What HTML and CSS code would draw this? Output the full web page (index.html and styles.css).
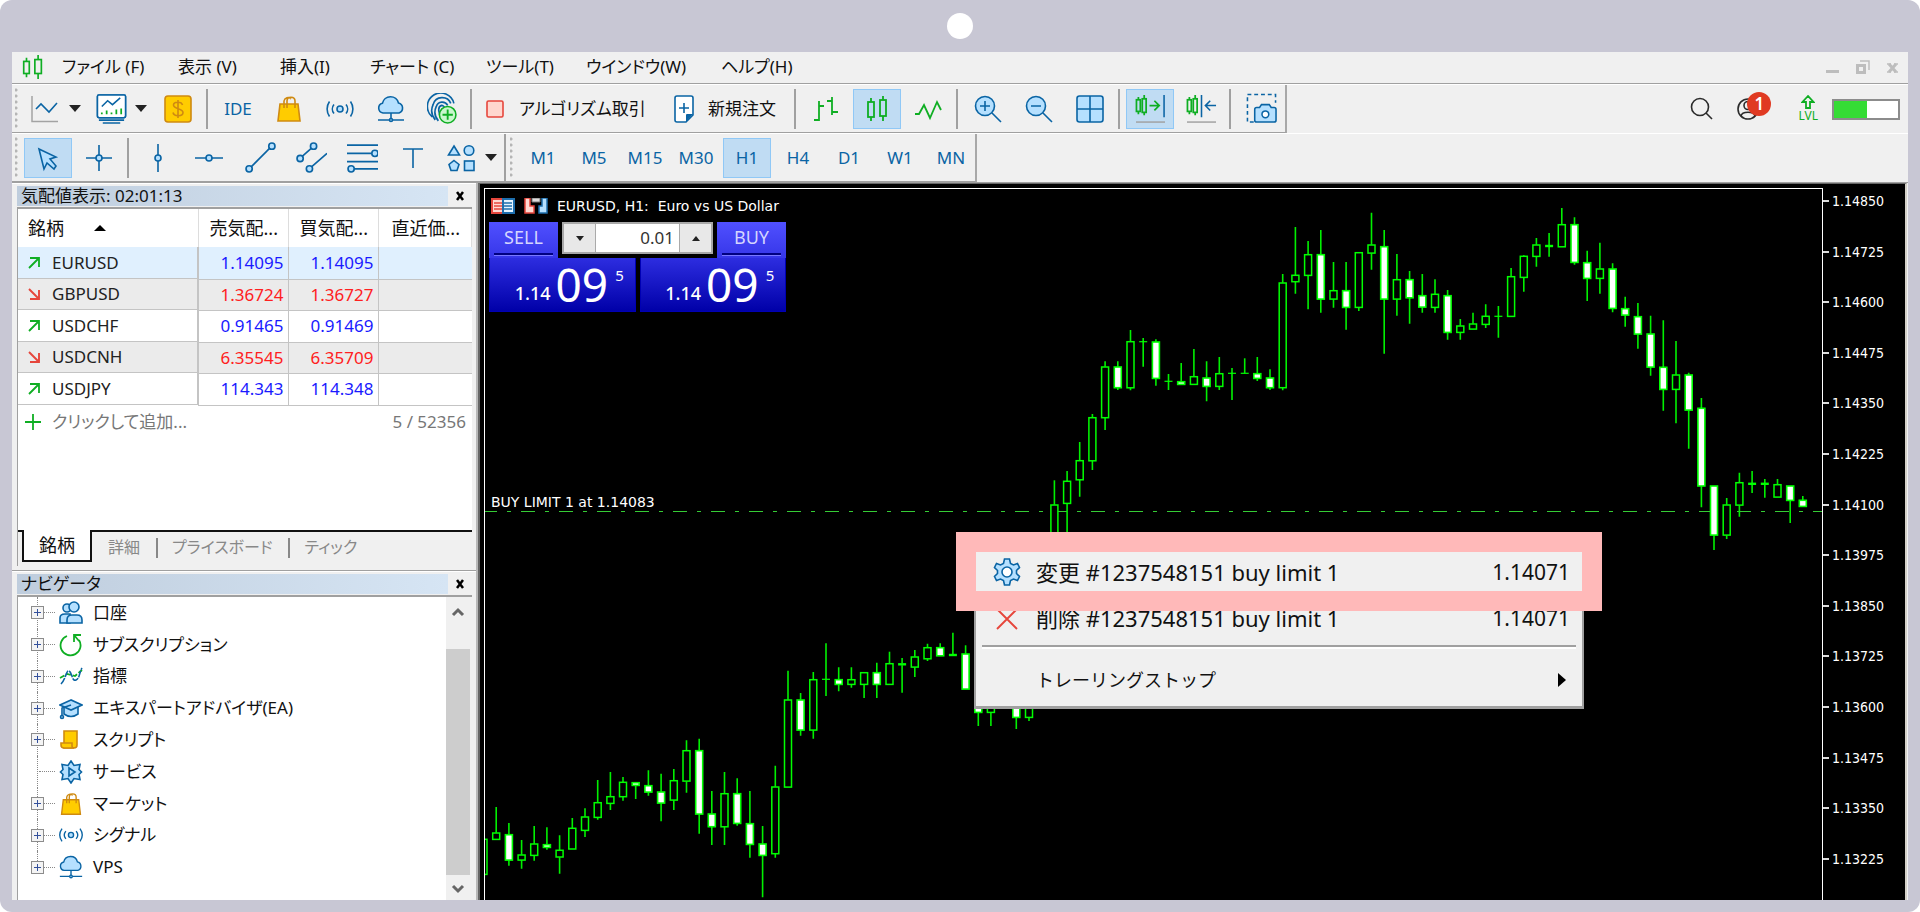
FILE: index.html
```
<!DOCTYPE html>
<html lang="ja">
<head>
<meta charset="utf-8">
<meta name="viewport" content="width=device-width, initial-scale=1">
<title>EURUSD, H1</title>
<link rel="stylesheet" href="styles.css">
</head>
<body>
<svg class="defs" aria-hidden="true">
  <symbol id="bag" viewBox="0 0 28 28"><path class="gold" d="M5 9h18l2 17H3z"/><path class="goldline" d="M9 13V6a4 4 0 0 1 7-2M12 13V6c0-5 8-5 8 0v7"/></symbol>
  <symbol id="signal" viewBox="0 0 28 28"><g class="line"><circle class="lite" cx="14" cy="14" r="3"/><path d="M8 9.500a7 7 0 0 0 0 9M20 9.500a7 7 0 0 1 0 9M3.500 6.500a13 13 0 0 0 0 15M24.500 6.500a13 13 0 0 1 0 15"/></g></symbol>
  <symbol id="cloud" viewBox="0 0 28 28"><path class="shape" d="M6 18a5 5 0 0 1-.5-9.800A8.200 8.200 0 0 1 21.500 8 5.200 5.200 0 0 1 22 18z"/><path class="line" d="M14 18v7M1 25h26"/><circle class="shape" cx="14" cy="25" r="1.500"/></symbol>
  <symbol id="candles" viewBox="0 0 28 28"><g class="green"><rect x="5" y="7" width="6" height="15"/><path d="M8 3v4M8 22v4"/><rect x="17" y="5" width="6" height="16"/><path d="M20 1v4M20 21v5"/></g></symbol>
  <symbol id="arrow-up" viewBox="0 0 14 14"><path class="green" d="M3 2h9v9M12 2L2 12"/></symbol>
  <symbol id="arrow-down" viewBox="0 0 14 14"><path class="red" d="M3 12h9V3M12 12L2 2"/></symbol>
</svg>

<div class="frame">
  <div class="camera"></div>
  <div class="window">
    <header class="menubar">
      <svg class="icon" viewBox="0 0 28 28"><g class="green"><rect x="4" y="8" width="6" height="13"/><path d="M7 4v4M7 21v4"/><rect x="16" y="6" width="7" height="15"/><path d="M19.500 1v5M19.500 21v6"/></g></svg>
      <nav class="menus">
        <button>ファイル (F)</button><button>表示 (V)</button><button>挿入(I)</button><button>チャート (C)</button><button>ツール(T)</button><button>ウインドウ(W)</button><button>ヘルプ(H)</button>
      </nav>
      <div class="winctl">
        <button aria-label="最小化"><svg viewBox="0 0 14 14"><path fill="#bdbdbd" d="M0 10h13v3H0z"/></svg></button>
        <button aria-label="元に戻す"><svg viewBox="0 0 14 14"><path fill="none" stroke="#bdbdbd" stroke-width="3" d="M1.500 5.500h7v7h-7z"/><path fill="none" stroke="#bdbdbd" stroke-width="1.500" d="M4 1h9v9"/></svg></button>
        <button aria-label="閉じる"><svg viewBox="0 0 14 14"><path stroke="#bdbdbd" stroke-width="3" d="M3 4l7 8M10 4l-7 8"/><path stroke="#bdbdbd" stroke-width="1.500" d="M1 4h4M8 4h4M1 12h4M8 12h4"/></svg></button>
      </div>
    </header>

    <div class="bar">
      <div class="strip">
        <i class="grip"></i>
        <div class="group first">
          <button class="drop" aria-label="ライン"><svg class="icon" viewBox="0 0 28 28"><path fill="none" stroke="#a3a3a3" stroke-width="1.500" d="M1 1v25.500h26"/><path class="line" d="M5 14l5-5 8 8 8-9"/></svg><i class="caret"></i></button>
          <button class="drop two" aria-label="表示形式"><svg class="icon big" viewBox="0 0 32 32"><path class="line" fill="#fff" d="M3 2h26q1.500 0 1.500 1.500v20q0 2-2 2h-25q-2 0-2-2v-20Q1.500 2 3 2z"/><path class="page" d="M3 2h26q1.500 0 1.500 1.500v20q0 2-2 2h-25q-2 0-2-2v-20Q1.500 2 3 2z"/><path class="line" d="M6 14l6-6 5 4 8-7M3 28h26M7 31h18"/><path class="green" d="M6 22v-2M11 22v-4M16 22v-2M21 22v-5M26 22v-6"/></svg><i class="caret"></i></button>
          <button aria-label="取引"><svg class="icon" viewBox="0 0 28 28"><rect class="gold" x="1" y="1" width="26" height="26" rx="3"/><path class="goldline" d="M18.500 10c-1-4-9-3.500-9 0 0 4.500 9.500 3 9.500 7.500 0 4-9 4.500-10 0M14 5v18"/></svg></button>
        </div>
        <div class="group">
          <button class="txt">IDE</button>
          <button aria-label="マーケット"><svg class="icon"><use href="#bag"/></svg></button>
          <button aria-label="シグナル"><svg class="icon"><use href="#signal"/></svg></button>
          <button aria-label="VPS"><svg class="icon"><use href="#cloud"/></svg></button>
          <button aria-label="コミュニティ"><svg class="icon big" viewBox="0 0 30 30"><path class="line" d="M5 23a13 13 0 1 1 21-13M8 26a14 14 0 0 1-2-15 9 9 0 0 1 17-1M11 27a13 13 0 0 1-2-14 6 6 0 0 1 11-1M14 24c-3-4-4-11 0-12 1 0 3 1 3 3"/><circle cx="20" cy="21" r="8" fill="#c9f7cd" stroke="#0fae23" stroke-width="1.500"/><path class="green" d="M20 16v10M15 21h10"/></svg></button>
        </div>
        <div class="group labels">
          <button class="wide"><svg class="icon" viewBox="0 0 28 28"><rect x="6" y="6" width="16" height="16" rx="1.500" fill="#ffd7cf" stroke="#e6463c" stroke-width="1.600"/></svg>アルゴリズム取引</button>
          <button class="wide"><svg class="icon" viewBox="0 0 28 28"><path class="page" d="M7 1h14q2 0 2 2v17l-7 7H7q-2 0-2-2V3q0-2 2-2z"/><path fill="#0a64a4" d="M23 19h-6q-1 0-1 1v7z"/><path class="line" d="M14 8v10M9 13h10"/></svg>新規注文</button>
        </div>
        <div class="group">
          <button aria-label="バーチャート"><svg class="icon" viewBox="0 0 28 28"><path class="green" d="M7 6v20M2 25h5M7 11h5M20 2v18M15 6h5M20 17h6"/></svg></button>
          <button class="on" aria-label="ローソク足"><svg class="icon"><use href="#candles"/></svg></button>
          <button aria-label="ラインチャート"><svg class="icon" viewBox="0 0 28 28"><path class="green" d="M1 19h4l5-9 6 13 7-16 4 8"/></svg></button>
        </div>
        <div class="group">
          <button aria-label="ズームイン"><svg class="icon" viewBox="0 0 28 28"><circle class="shape" cx="11" cy="11" r="9.500"/><path class="line" d="M18 18l9 9M6 11h10M11 6v10"/></svg></button>
          <button aria-label="ズームアウト"><svg class="icon" viewBox="0 0 28 28"><circle class="shape" cx="11" cy="11" r="9.500"/><path class="line" d="M18 18l9 9M6 11h10"/></svg></button>
          <button aria-label="タイル表示"><svg class="icon" viewBox="0 0 28 28"><rect class="shape" x="1" y="1" width="26" height="26" rx="2.500"/><path class="line" d="M14 1v26M1 14h26"/></svg></button>
        </div>
        <div class="group">
          <button class="on" aria-label="自動スクロール"><svg class="icon big" viewBox="0 0 32 32"><g class="green"><path d="M3.500 4v3M3.500 19v3M9.500 2v4M9.500 20v3M15 13h10M20 8l5 5-5 5"/><rect x="1.500" y="7" width="4" height="12"/><rect x="7.500" y="6" width="4" height="14"/></g><path class="line" d="M30 2v23"/><path stroke="#a0a0a0" stroke-width="1.500" d="M1 30h30"/></svg></button>
          <button aria-label="チャートシフト"><svg class="icon big" viewBox="0 0 32 32"><g class="green"><path d="M3.500 4v3M3.500 19v3M9.500 2v4M9.500 20v3"/><rect x="1.500" y="7" width="4" height="12"/><rect x="7.500" y="6" width="4" height="14"/></g><path class="line" d="M16 2v23M31 13H21M25 8l-5 5 5 5"/><path stroke="#a0a0a0" stroke-width="1.500" d="M1 30h30"/></svg></button>
        </div>
        <div class="group">
          <button aria-label="スクリーンショット"><svg class="icon big" viewBox="0 0 32 32"><path class="line" stroke-dasharray="4 3" d="M8 30H1.500V1.500h29V10"/><path class="shape" d="M11 15h3l2-3h8l2 3h3q2 0 2 2v11q0 2-2 2H11q-2 0-2-2V17q0-2 2-2z"/><circle class="page" cx="20" cy="22" r="3.500"/></svg></button>
        </div>
      </div>
      <div class="status">
        <button aria-label="検索"><svg class="icon" viewBox="0 0 28 28"><g fill="none" stroke="#2b2b2b" stroke-width="1.600"><circle cx="12" cy="12" r="8.500"/><path d="M18 18l6 6"/></g></svg></button>
        <button class="user" aria-label="通知"><svg class="icon" viewBox="0 0 28 28"><g fill="none" stroke="#2b2b2b" stroke-width="1.600"><circle cx="14" cy="14" r="10"/><circle cx="14" cy="10.500" r="4"/><path d="M7 21c1-5 13-5 14 0"/></g></svg><span class="badge">1</span></button>
        <div class="lvl"><svg viewBox="0 0 14 14"><path class="green" d="M7 1L1.500 7H5v6h4V7h3.500z"/></svg>LVL</div>
        <div class="meter"><i></i></div>
      </div>
    </div>

    <div class="bar">
      <div class="strip">
        <i class="grip"></i>
        <div class="group first">
          <button class="on" aria-label="カーソル"><svg class="icon" viewBox="0 0 28 28"><path class="shape" d="M5 5l17 8-6 2 6 7-2 3-7-6-3 6z"/></svg></button>
          <button aria-label="十字カーソル"><svg class="icon" viewBox="0 0 28 28"><path class="line" d="M14 1v10M14 17v10M1 14h10M17 14h10"/><circle class="shape" cx="14" cy="14" r="3"/></svg></button>
        </div>
        <div class="group tools">
          <button aria-label="垂直線"><svg class="icon" viewBox="0 0 28 28"><path class="line" d="M14 0v11M14 17v11"/><circle class="shape" cx="14" cy="14" r="3"/></svg></button>
          <button aria-label="水平線"><svg class="icon" viewBox="0 0 28 28"><path class="line" d="M0 14h11M17 14h11"/><circle class="shape" cx="14" cy="14" r="3"/></svg></button>
          <button aria-label="トレンドライン"><svg class="icon big" viewBox="0 0 30 30"><path class="line" d="M6 24L24 6"/><circle class="shape" cx="4" cy="26" r="3"/><circle class="shape" cx="26" cy="4" r="3"/></svg></button>
          <button aria-label="チャンネル"><svg class="icon big" viewBox="0 0 30 30"><path class="line" d="M6 14l9-8M15 24l15-13"/><circle class="shape" cx="4" cy="16" r="3"/><circle class="shape" cx="17" cy="4" r="3"/><circle class="shape" cx="13" cy="26" r="3"/></svg></button>
          <button aria-label="フィボナッチ"><svg class="icon big" viewBox="0 0 30 30"><path class="line" d="M0 3h30M0 11h24M0 19h30M7 26h23"/><circle class="shape" cx="27" cy="11" r="3"/><circle class="shape" cx="4" cy="26" r="3"/></svg></button>
          <button aria-label="テキスト"><svg class="icon" viewBox="0 0 28 28"><path class="line" d="M4 5h20M14 5v19"/></svg></button>
          <button class="drop" aria-label="図形"><svg class="icon" viewBox="0 0 28 28"><path class="shape" d="M7 2l5.500 9h-11zM7 16.500l5 4-2 6H4l-2-6z"/><circle class="shape" cx="22" cy="6.500" r="4.800"/><rect class="shape" x="17.500" y="17" width="9.500" height="9.500"/></svg><i class="caret"></i></button>
        </div>
        <i class="grip inner"></i>
        <div class="group first frames">
          <button class="txt">M1</button><button class="txt">M5</button><button class="txt">M15</button><button class="txt">M30</button><button class="txt on">H1</button><button class="txt">H4</button><button class="txt">D1</button><button class="txt">W1</button><button class="txt">MN</button>
        </div>
      </div>
    </div>

    <main class="work">
      <aside class="side">
        <section class="panel watch">
          <div class="title"><h2>気配値表示: 02:01:13</h2><button class="close" aria-label="閉じる"><svg viewBox="0 0 10 10"><path stroke="#000" stroke-width="2.500" d="M2 1l6 8M8 1L2 9"/></svg></button></div>
          <div class="box">
            <table>
              <thead><tr><th>銘柄<i class="sort"></i></th><th>売気配...</th><th>買気配...</th><th>直近価...</th></tr></thead>
              <tbody>
                <tr class="up sel"><td><svg><use href="#arrow-up"/></svg>EURUSD</td><td>1.14095</td><td>1.14095</td><td></td></tr>
                <tr class="down"><td><svg><use href="#arrow-down"/></svg>GBPUSD</td><td>1.36724</td><td>1.36727</td><td></td></tr>
                <tr class="up"><td><svg><use href="#arrow-up"/></svg>USDCHF</td><td>0.91465</td><td>0.91469</td><td></td></tr>
                <tr class="down"><td><svg><use href="#arrow-down"/></svg>USDCNH</td><td>6.35545</td><td>6.35709</td><td></td></tr>
                <tr class="up"><td><svg><use href="#arrow-up"/></svg>USDJPY</td><td>114.343</td><td>114.348</td><td></td></tr>
              </tbody>
            </table>
            <div class="add"><svg viewBox="0 0 18 18"><path class="green" d="M9 1v16M1 9h16"/></svg><span>クリックして追加...</span><span class="count">5 / 52356</span></div>
            <div class="tabs"><button class="cur">銘柄</button><button>詳細</button><button>プライスボード</button><button>ティック</button></div>
          </div>
        </section>
        <section class="panel navi">
          <div class="title"><h2>ナビゲータ</h2><button class="close" aria-label="閉じる"><svg viewBox="0 0 10 10"><path stroke="#000" stroke-width="2.500" d="M2 1l6 8M8 1L2 9"/></svg></button></div>
          <div class="box treebox">
            <ul class="tree">
              <li><i class="plus"></i><svg viewBox="0 0 24 24"><circle class="shape" cx="8" cy="7" r="4"/><path class="shape" d="M1 22v-5q0-4 5-4h5v9z"/><circle class="shape" cx="15" cy="6" r="5"/><path class="shape" d="M8 22v-3q0-5 5-5h5q5 0 5 5v3z"/></svg>口座</li>
              <li><i class="plus"></i><svg viewBox="0 0 24 24"><path class="green" d="M8 3a10 10 0 1 0 12 4M15 9V2h7M15 2l5 6"/></svg>サブスクリプション</li>
              <li><i class="plus"></i><svg viewBox="0 0 24 24"><path class="green" stroke-dasharray="5 2" d="M1 14l7-4 8 2 7-6"/><path class="line" stroke-dasharray="7 1" d="M2 20c5-5 5-14 8-13s3 11 7 9 3-7 6-12"/></svg>指標</li>
              <li><i class="plus"></i><svg viewBox="0 0 24 24"><path class="shape" d="M5 11v7q7 5 14 0v-7"/><path class="shape" d="M12 4L1 9l11 5 11-5z"/><path class="line" d="M12 9L3 12v7"/><circle class="shape" cx="3" cy="21" r="1.500"/></svg>エキスパートアドバイザ(EA)</li>
              <li><i class="plus"></i><svg viewBox="0 0 24 24"><path class="gold" d="M5 3h13v14q0 3-3 3H5V3z"/><path class="gold" d="M2 15h11v3q0 2 2 2H5q-3 0-3-3z"/></svg>スクリプト</li>
              <li><i class="plus none"></i><svg viewBox="0 0 24 24"><path class="shape" d="M12 1l3 4.500 6-1-1 5 2.500 2.500-2.500 2.500 1 5-6-1-3 4.500-3-4.500-6 1 1-5L1.500 12 4 9.500l-1-5 6 1z"/><path class="line" d="M10 8l6 4-6 4z"/></svg>サービス</li>
              <li><i class="plus"></i><svg><use href="#bag"/></svg>マーケット</li>
              <li><i class="plus"></i><svg><use href="#signal"/></svg>シグナル</li>
              <li><i class="plus"></i><svg><use href="#cloud"/></svg>VPS</li>
            </ul>
            <div class="scroll"><svg viewBox="0 0 14 10"><path d="M2 8l5-5 5 5"/></svg><i></i><svg viewBox="0 0 14 10"><path d="M2 2l5 5 5-5"/></svg></div>
          </div>
        </section>
      </aside>

      <section class="chart">
        <div class="plot">
          <svg class="bars" id="bars" role="img" aria-label="EURUSD H1 チャート"></svg>
          <div class="order">BUY LIMIT 1 at 1.14083</div>
          <div class="head">
            <svg viewBox="0 0 24 16"><path fill="#ffd9d2" stroke="#e6463c" stroke-width="2" d="M1 1h11v14H1z"/><path fill="#e5f4ff" stroke="#1e6fae" stroke-width="2" d="M12 1h11v14H12z"/><path stroke="#e6463c" stroke-width="1.500" d="M3 5h8M3 8h8M3 11h8"/><path stroke="#1e6fae" stroke-width="1.500" d="M13 5h8M13 8h8M13 11h8"/></svg>
            <svg viewBox="0 0 24 16"><path fill="#ffd9d2" stroke="#e6463c" stroke-width="1.500" d="M1 0v15h9V8H6V0z"/><path fill="#b5e0ff" stroke="#1e6fae" stroke-width="1.500" d="M23 0v15h-8V8h3V0z"/><path fill="#ddd" stroke="#777" d="M8 0h8v4H8z"/></svg>
            <span>EURUSD, H1:&nbsp; Euro vs US Dollar</span>
          </div>
          <div class="deal">
            <div class="dealtop">
              <button class="side-btn">SELL</button>
              <div class="lot"><button aria-label="減らす"><i class="caret small"></i></button><input aria-label="ロット" value="0.01"><button aria-label="増やす"><i class="caret small flip"></i></button></div>
              <button class="side-btn">BUY</button>
            </div>
            <div class="dealprices">
              <button class="price"><span>1.14</span><b>09</b><sup>5</sup></button>
              <button class="price"><span>1.14</span><b>09</b><sup>5</sup></button>
            </div>
          </div>
          <div class="context" role="menu">
            <button class="item hot" role="menuitem"><svg viewBox="0 0 28 28"><path class="shape" d="M11.500 1h5l1 4.500 3 1.500 4-1.500 2 4-3 3v3l3 3-2 4-4-1.500-3 1.500-1 4.500h-5l-1-4.500-3-1.500-4 1.500-2-4 3-3v-3l-3-3 2-4 4 1.500 3-1.500z"/><circle class="page" cx="14" cy="14" r="5"/></svg><span>変更 #1237548151 buy limit 1</span><span class="val">1.14071</span></button>
            <button class="item second" role="menuitem"><svg viewBox="0 0 28 28"><path class="red" d="M4 5l20 20M24 5L4 25"/></svg><span>削除 #1237548151 buy limit 1</span><span class="val">1.14071</span></button>
            <hr>
            <button class="item third" role="menuitem"><span class="noicon">トレーリングストップ</span><i class="more"></i></button>
          </div>
        </div>
        <ol class="axis">
          <li>1.14850</li><li>1.14725</li><li>1.14600</li><li>1.14475</li><li>1.14350</li><li>1.14225</li><li>1.14100</li><li>1.13975</li><li>1.13850</li><li>1.13725</li><li>1.13600</li><li>1.13475</li><li>1.13350</li><li>1.13225</li>
        </ol>
      </section>
    </main>
  </div>
</div>
<script src="chart.js"></script>
</body>
</html>
```
FILE: chart.js
```
// Each bar: [high, body top, body bottom, low, kind]; h = hollow, w = filled.
// Levels are in thirds of a pixel from the base of their section.
const sections = [
  { base: 1293, bars: [
    [657,657,764,764,'h'],[561,638,659,659,'h'],[609,643,721,737,'w'],[660,704,721,746,'h'],[618,671,707,722,'h'],
    [622,673,683,689,'w'],[646,690,712,761,'h'],[594,624,688,688,'h'],[565,590,632,651,'h'],[480,547,593,599,'h'],
    [456,529,551,570,'h'],[471,486,531,542,'h'],[486,487,497,537,'w'],[451,496,517,527,'w'],[461,515,550,604,'w'],
    [447,481,541,570,'h'],[361,391,484,518,'h'],[356,391,583,641,'w'],[513,581,621,675,'w'],[456,520,621,675,'h'],
    [475,520,611,617,'w'],[513,610,674,713,'w'],[618,671,707,832,'w'],[437,500,702,713,'h'],[152,239,502,502,'h'],
    [219,239,331,347,'w'],[156,178,331,356,'h'],[70,178,178,228,'w'],[142,178,194,214,'w'],[142,178,194,203,'h'],
    [157,157,194,234,'h'],[128,157,194,234,'w'],[95,130,194,194,'h'],[114,130,136,218,'w'],[90,110,142,171,'h'],
    [71,82,117,123,'h'],[70,82,108,108,'w'],[38,102,108,108,'w'],[76,101,208,208,'w'],[200,210,278,318,'w'],
    [200,220,278,318,'h'],[200,210,250,255,'h'],[200,210,293,327,'w'],[200,210,293,303,'h'],[100,120,240,250,'h']
  ] },
  { base: 363, bars: [
    [511,584,900,900,'h'],[483,513,581,700,'h'],[396,451,510,560,'h'],[312,322,453,480,'h'],[154,170,324,360,'h'],
    [154,170,234,240,'w'],[60,94,234,241,'h'],[84,95,95,170,'w'],[88,95,206,227,'w'],[192,214,214,240,'w'],
    [159,214,224,224,'w'],[117,199,224,224,'h'],[154,203,230,274,'w'],[141,190,230,240,'h'],[174,190,190,270,'w'],
    [145,190,190,190,'w'],[141,190,206,213,'w'],[178,203,234,240,'w']
  ] },
  { base: 33, bars: [
    [222,248,564,571,'h'],[81,225,246,281,'h'],[123,163,227,328,'h'],[90,163,298,338,'w'],[186,271,298,323,'h'],
    [186,271,323,389,'w'],[157,157,323,333,'h'],[38,134,160,209,'h'],[90,139,298,461,'w'],[162,238,298,347,'h'],
    [213,238,294,371,'w'],[222,286,322,338,'w'],[238,282,323,338,'h'],[270,286,398,419,'w'],[357,377,398,419,'h'],
    [338,371,388,388,'h'],[313,348,374,384,'h'],[318,349,349,413,'w'],[204,229,350,350,'h'],[166,168,233,275,'h'],
    [114,134,170,200,'h'],[99,136,140,170,'w'],[24,73,141,141,'h'],[52,73,188,194,'w'],[152,187,236,303,'w'],
    [128,206,236,281,'h'],[190,206,326,337,'w'],[290,325,346,380,'w'],[309,349,403,446,'w'],[347,401,502,527,'w'],
    [361,501,569,632,'w'],[423,524,569,670,'h'],[518,524,631,746,'w'],[594,624,859,922,'w'],[857,857,1006,1050,'w'],
    [894,914,1006,1017,'h'],[818,847,916,950,'h'],[813,849,854,879,'w'],[837,849,854,893,'w'],[837,853,892,892,'h'],
    [857,857,902,969,'w'],[888,900,920,920,'w']
  ] }
];
const STEP = 12.686;
let index = 0;
let out = '';
const orderY = 322.5;
out += `<line class="level" x1="0" x2="100%" y1="${orderY}" y2="${orderY}"/>`;
for (const { base, bars } of sections) {
  for (const [high, top, bottom, low, kind] of bars) {
    const x = (STEP * index - 1.5).toFixed(1);
    const y = v => ((v + base) / 3).toFixed(1);
    const h = bottom - top;
    out += `<path class="bar-line" d="M${x} ${y(high)}V${y(top)}M${x} ${y(bottom)}V${y(low)}"/>`;
    out += h < 7
      ? `<path class="bar-flat" stroke-width="${h ? 2.4 : 1.2}" d="M${x - 4} ${y((top + bottom) / 2)}h8"/>`
      : `<rect class="bar-${kind}" x="${(x - 3.5).toFixed(1)}" y="${y(top + 1)}" width="7" height="${(h / 3 - 0.6).toFixed(1)}"/>`;
    index += 1;
  }
}
document.getElementById('bars').innerHTML = out;
```
FILE: styles.css
```
* { box-sizing: border-box; }
body {
  margin: 0;
  background: #fff;
  color: #111;
  font: 17px/24px "Noto Sans", "Noto Sans CJK JP", sans-serif;
  font-feature-settings: "palt";
}
button, input { font: inherit; font-feature-settings: inherit; color: inherit; border: 0; padding: 0; background: none; }
h2, ul, ol { margin: 0; padding: 0; font: inherit; list-style: none; }
svg { display: block; flex: none; }
.defs { width: 0; height: 0; position: absolute; }
.line { fill: none; stroke: #0a64a4; stroke-width: 1.600; }
circle.lite { fill: #b5e0ff; }
.page { fill: #fff; stroke: #0a64a4; stroke-width: 1.600; }
.shape { fill: #b5e0ff; stroke: #0a64a4; stroke-width: 1.600; }
.green { fill: none; stroke: #0fae23; stroke-width: 1.800; }
.red { fill: none; stroke: #e6463c; stroke-width: 1.900; }
.gold { fill: #fc0; stroke: #cf8a11; stroke-width: 1.600; }
.goldline { fill: none; stroke: #cf8a11; stroke-width: 1.600; }

.frame { display: flex; flex-direction: column; min-height: 100vh; padding: 0 12px 12px; background: #c8c7d4; border-radius: 12px; }
.camera { width: 26px; height: 26px; margin: 13px auto; border-radius: 50%; background: #fff; }
.window { flex: 1; display: flex; flex-direction: column; background: #f0f0f0; }

.menubar { display: flex; align-items: center; height: 32px; padding: 0 8px 2px; border-bottom: 1px solid #a0a0a0; }
.menubar .icon { width: 26px; height: 28px; margin-right: 16px; }
.menus { display: grid; grid-template-columns: 116px 102px 90px 116px 100px 135px auto; justify-items: start; white-space: nowrap; }
.winctl { display: flex; gap: 16px; margin-left: auto; }
.winctl svg { width: 14px; height: 14px; }

.bar { display: flex; justify-content: space-between; height: 49px; border-top: 1px solid #fff; }
.strip { display: flex; align-items: center; height: 48px; padding-left: 3px; border-right: 2px solid #a8a8a8; border-bottom: 1px solid #a0a0a0; }
.grip { width: 3px; height: 42px; margin-right: 6px; background: radial-gradient(circle at 1px 2px, #b5b5b5 1px, transparent 2px) 0 0 / 3px 6px; }
.grip.inner { margin-left: 4px; }
.group { display: flex; align-items: center; gap: 3px; height: 40px; padding: 0 4px 0 6px; border-left: 2px solid #a0a0a0; }
.group:last-child { padding-right: 0; }
.group.first { border: 0; padding-left: 0; }
.group.labels { width: 324px; justify-content: space-between; padding: 0 18px 0 9px; }
.group.tools { height: 48px; padding: 0; border: 0; border-right: 2px solid #a0a0a0; }
.group.tools::before { content: ""; width: 2px; height: 40px; margin-right: 2px; background: #a0a0a0; }
.group button { display: flex; align-items: center; justify-content: center; width: 48px; height: 40px; }
.group button.on { background: #c0dcf3; border: 1px solid #90c8f6; }
.group button.wide { width: auto; gap: 10px; white-space: nowrap; }
.group button.drop { width: 64px; gap: 10px; }
.group button.two { width: 60px; gap: 8px; }
.icon { width: 28px; height: 28px; }
.icon.big { width: 31px; height: 31px; }
.txt { color: #0a64a4; }
.caret { border: 6px solid transparent; border-top: 7px solid #222; border-bottom: 0; }
.caret.small { border-width: 4px; border-top-width: 5px; border-bottom: 0; }
.caret.flip { transform: rotate(180deg); }

.status { display: flex; align-items: center; height: 48px; padding-right: 8px; }
.status .user { position: relative; margin-left: 18px; }
.badge { position: absolute; left: 13px; top: -3px; width: 24px; height: 24px; border-radius: 50%; background: #e03a22; color: #fff; font-weight: 600; text-align: center; }
.lvl { display: flex; flex-direction: column; align-items: center; margin: 0 14px 0 36px; color: #0fae23; font-size: 12px; line-height: 14px; }
.lvl svg { width: 14px; height: 14px; }
.meter { width: 68px; height: 21px; border: 2px solid #8c8c8c; background: #fff; }
.meter i { display: block; width: 52%; height: 100%; background: #35dc35; }

.work { flex: 1; display: flex; border-top: 1px solid #a0a0a0; }
.side { flex: none; display: flex; flex-direction: column; width: 466px; border-right: 2px solid #b8b8b8; }
.panel { display: flex; flex-direction: column; padding: 2px 4px 0 5px; border-top: 1px solid #fff; }
.watch { height: 388px; padding-bottom: 4px; border-bottom: 1px solid #a0a0a0; }
.navi { flex: 1; }
.title { display: flex; height: 20px; margin-bottom: 1px; }
.title h2 { flex: 1; padding-left: 4px; line-height: 20px; background: linear-gradient(90deg, #bfcddd, #d6e5f4); }
.title .close { width: 20px; margin: 0 2px; }
.title .close svg { width: 10px; height: 10px; margin: auto; }
.box { flex: 1; display: flex; flex-direction: column; border: 1px solid #a0a0a0; border-width: 2px 0 0 1px; background: #fff; }
table { border-collapse: collapse; table-layout: fixed; width: 100%; }
th { height: 38px; padding: 0 0 0 11px; border-right: 1px solid #ddd; font-weight: 400; font-size: 18px; text-align: left; white-space: nowrap; }
th:first-child { width: 180px; padding-left: 10px; }
th:last-child { padding-left: 13px; }
th:nth-child(2), th:nth-child(3) { width: 90px; }
.sort { display: inline-block; margin: 0 0 4px 30px; border: 6px solid transparent; border-bottom: 6px solid #000; border-top: 0; }
td { height: 32px; padding: 0 4px 0 0; border: 1px solid #c4c4c4; border-width: 0 1px 1px; text-align: right; }
tr:nth-child(even) td { height: 31px; background: #ebebeb; }
tr.sel td { background: #e0f0fe; }
td:first-child { display: flex; align-items: center; gap: 11px; padding-left: 9px; border-left: 0; }
td:first-child svg { width: 14px; height: 14px; }
td:last-child { border-right: 0; }
.up td { color: #1a1aff; }
.down td { color: #ff2020; }
.up td:first-child, .down td:first-child { color: #222; }
.add { display: flex; align-items: center; height: 32px; padding: 0 6px 0 6px; gap: 10px; color: #777; }
.add svg { width: 18px; height: 18px; }
.count { margin-left: auto; }
.tabs { display: flex; height: 36px; margin-top: auto; background: linear-gradient(#111 2px, #f0f0f0 2px); color: #888; font-size: 16px; padding-left: 4px; }
.tabs button { height: 34px; padding: 0 16px; position: relative; white-space: nowrap; }
.tabs button + button + button::before { content: ""; position: absolute; left: 0; top: 8px; width: 2px; height: 20px; background: #888; }
.tabs .cur { height: 32px; width: 70px; padding: 0; background: #fff; color: #111; border: 2px solid #111; border-top: 0; font-size: 18px; }
.treebox { flex-direction: row; }
.tree { flex: 1; display: grid; grid-auto-rows: 1fr; height: 286px; padding-left: 13px; }
.tree li { position: relative; display: flex; align-items: center; }
.tree li svg { width: 24px; height: 24px; margin: 0 10px 0 15px; }
.tree li::before { content: ""; position: absolute; left: 6px; top: 0; bottom: 0; border-left: 1px dotted #888; }
.tree li:last-child::before { bottom: 50%; }
.tree li::after { content: ""; position: absolute; left: 8px; width: 16px; border-top: 1px dotted #888; }
.plus { z-index: 1; width: 13px; height: 13px; border: 1px solid #8c8c8c; background: linear-gradient(#33509b, #33509b) center / 7px 1px no-repeat, linear-gradient(#33509b, #33509b) center / 1px 7px no-repeat, #f4f4f4; }
.plus.none { visibility: hidden; }
.scroll { display: flex; flex-direction: column; align-items: center; width: 26px; padding: 10px 2px 6px 0; background: #f0f0f0; }
.scroll svg { width: 14px; height: 10px; fill: none; stroke: #666; stroke-width: 3; }
.scroll i { flex: 1; width: 100%; margin: 32px 0 9px; background: #cdcdcd; }

.chart { flex: 1; min-width: 0; display: flex; margin-right: 1px; padding: 4px 0 0 4px; border: 2px solid #666; border-width: 1px 2px 0 2px; border-right-color: #d4d0c8; background: #000; color: #fff; font: 14px/20px "DejaVu Sans", sans-serif; }
.plot { position: relative; flex: 1; min-width: 0; overflow: hidden; border: 1px solid #fff; border-bottom: 0; }
.bars { position: absolute; width: 100%; height: 100%; }
.bar-line { stroke: #00f000; stroke-width: 1.600; }
.bar-flat { stroke: #0f0; }
.bar-h { fill: #000; stroke: #0f0; stroke-width: 1.500; }
.bar-w { fill: #fff; stroke: #0f0; stroke-width: 1.600; }
.level { stroke: #35cc35; stroke-dasharray: 14 10 4 10; stroke-dashoffset: 2; }
.order { position: absolute; left: 6px; top: 303px; }
.head { display: flex; align-items: center; gap: 9px; height: 33px; padding-left: 6px; position: relative; }
.head svg { width: 24px; height: 16px; }
.deal { position: relative; width: 297px; margin-left: 4px; font: 18px/26px "Noto Sans", sans-serif; }
.dealtop { display: flex; height: 36px; }
.side-btn { width: 69px; color: #d5d5ff; background: linear-gradient(#5050ff, #3636e8); }
.side-btn:last-child { margin-left: auto; }
.side-btn::after { content: ""; display: block; margin: 3px 5px 0; border-top: 2px solid #000080; border-bottom: 1px solid #7878ff; }
.lot { display: flex; width: 151px; height: 32px; margin-left: 4px; border: 2px solid #a8a8a8; background: #fff; }
.lot button { width: 31px; background: #e8e8e8; display: grid; place-items: center; }
.lot input { flex: 1; min-width: 0; padding-right: 5px; text-align: right; color: #333; border: 1px solid #aaa; border-width: 0 1px; font-size: 17px; }
.dealprices { display: grid; grid-template-columns: 1fr 1fr; gap: 4px; }
.price { display: flex; align-items: flex-end; justify-content: center; height: 54px; padding: 0 0 5px 14px; gap: 5px; color: #fff; background: linear-gradient(#2d2de0, #0000a8); border: 1px solid #0000b4; border-top: 0; }
.price b { font-weight: 400; font-size: 46px; line-height: 44px; }
.price span { font-weight: 500; }
.price sup { align-self: flex-start; line-height: 34px; margin-left: 2px; }
.context { position: absolute; left: 489px; top: 359px; width: 610px; padding: 2px 0 7px; border: 2px solid #a0a0a0; border-bottom-width: 3px; background: #f0f0f0; color: #111; font: 22px/28px "Noto Sans", "Noto Sans CJK JP", sans-serif; }
.item { display: flex; align-items: center; width: 100%; height: 39px; padding: 0 12px 0 17px; text-align: left; }
.item svg { width: 28px; height: 28px; margin-right: 15px; }
.hot { position: relative; background: #f0f0f0; box-shadow: 0 0 0 20px #ffb9b9; }
.second { margin-top: 7px; }
.third { margin-top: 11px; font-size: 18px; }
.noicon { margin-left: 43px; }
.val { margin-left: auto; font-size: 21px; }
.more { margin: 0 4px 0 auto; border: 7px solid transparent; border-left: 8px solid #000; border-right: 0; }
.context hr { height: 4px; margin: 8px 6px 0; border: 0; border-top: 2px solid #a0a0a0; background: #fff; }
.axis { flex: none; display: flex; flex-direction: column; justify-content: space-between; width: 82px; height: 681px; padding-top: 3px; font-family: "DejaVu Sans Condensed", sans-serif; }
.axis li { display: flex; align-items: center; gap: 3px; }
.axis li::before { content: ""; width: 6px; height: 2px; background: #ddd; }
```
